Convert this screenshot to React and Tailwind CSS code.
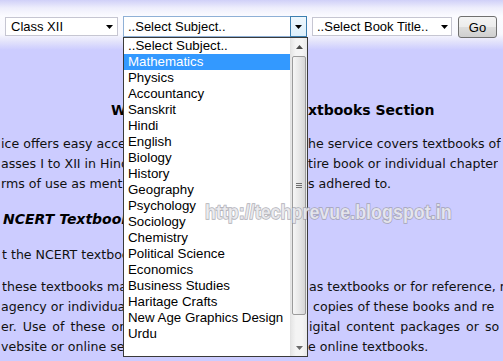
import React from "react";

function Tri({ color = "#000" }) {
  return (
    <svg width="7" height="4" viewBox="0 0 7 4" className="block shrink-0">
      <path d="M0 0H7L3.5 4Z" fill={color} />
    </svg>
  );
}

function UpTri() {
  return (
    <svg width="7" height="4" viewBox="0 0 7 4" className="block">
      <path d="M3.5 0L7 4H0Z" fill="#4a4a4a" />
    </svg>
  );
}

const subjects = [
  "..Select Subject..",
  "Mathematics",
  "Physics",
  "Accountancy",
  "Sanskrit",
  "Hindi",
  "English",
  "Biology",
  "History",
  "Geography",
  "Psychology",
  "Sociology",
  "Chemistry",
  "Political Science",
  "Economics",
  "Business Studies",
  "Haritage Crafts",
  "New Age Graphics Design",
  "Urdu",
];

function Line({ left, right, leftClass, rightClass, rowClass }) {
  return (
    <div className={"flex h-[20px] leading-[20px] whitespace-nowrap " + (rowClass || "")}>
      <div className={"w-[123px] shrink-0 overflow-hidden " + (leftClass || "")}>{left}</div>
      <div className="w-[185px] shrink-0" />
      <div className={"min-w-0 overflow-hidden " + (rightClass || "")}>{right}</div>
    </div>
  );
}

export default function App() {
  return (
    <div className="relative w-[503px] h-[361px] overflow-hidden bg-[#ccccff] font-['DejaVu_Sans',sans-serif] text-[12.6px] text-[#111]">
      {/* header band */}
      <div className="h-[50px] bg-[linear-gradient(to_bottom,#d0d0f8_0px,#eeeefc_8px,#fbfbff_16px,#f8f8fe_34px,#e2e2fb_42px,#ccccff_50px)] flex items-start pt-[16px] pl-[5px] font-['Liberation_Sans',sans-serif] text-[13px] text-black">
        <div className="mt-[1px] w-[113px] h-[19px] border border-[#c6c6d2] bg-white flex items-center justify-between pl-[5px] pr-[4px] leading-none">
          <span>Class XII</span>
          <Tri />
        </div>
        <div className="ml-[5px] w-[184px] h-[21px] flex">
          <div className="flex-1 border border-r-0 border-[#8fb0d6] bg-white flex items-center pl-[4px] leading-none">
            ..Select Subject..
          </div>
          <div className="w-[17px] border border-[#3c7fb1] bg-[linear-gradient(to_bottom,#eef7fd,#dcefFC)] flex items-center justify-center">
            <Tri />
          </div>
        </div>
        <div className="ml-[5px] mt-[1px] w-[140px] h-[19px] border border-[#c6c6d2] bg-white flex items-center justify-between pl-[4px] pr-[3px] leading-none">
          <span>..Select Book Title..</span>
          <Tri />
        </div>
        <div className="ml-[6px] w-[39px] h-[22px] rounded-[3px] border border-[#707070] bg-[linear-gradient(to_bottom,#f4f4f4_0%,#ececec_50%,#dddddd_51%,#cfcfcf_100%)] flex items-center justify-center leading-none">
          Go
        </div>
      </div>

      {/* page content */}
      <div className="flex flex-col">
        <div className="mt-[50px]">
          <Line
            rowClass="font-bold text-[14px] text-black"
            leftClass="pl-[111px]"
            left="W"
            right="xtbooks Section"
          />
        </div>

        <div className="mt-[14px] flex flex-col">
          <Line leftClass="pl-[1px]" left="ice offers easy access" right="he service covers textbooks of" />
          <Line leftClass="pl-[1px]" left="asses I to XII in Hindi" right="tire book or individual chapter" />
          <Line leftClass="pl-[1px]" left="rms of use as mentioned" right="s adhered to." />
        </div>

        <div className="mt-[15px]">
          <Line rowClass="font-bold italic text-[14px] text-black" leftClass="pl-[3px]" left="NCERT Textbooks" right="" />
        </div>

        <div className="mt-[16px]">
          <Line leftClass="pl-[2px]" left="t the NCERT textbooks" right="" />
        </div>

        <div className="mt-[12px] flex flex-col">
          <Line leftClass="pl-[2px]" left="these textbooks may" right="as textbooks or for reference, r" rightClass="pl-[1px]" />
          <Line leftClass="pl-[1px]" left="agency or individual may" right="copies of these books and re" rightClass="pl-[5px]" />
          <Line rowClass="[word-spacing:2px]" leftClass="pl-[1px]" left="er. Use of these online" right="igital content packages or so" rightClass="pl-[1px]" />
          <Line leftClass="pl-[1px]" left="vebsite or online service" right="e online textbooks." />
        </div>
      </div>

      {/* open dropdown list */}
      <div className="absolute left-[123px] top-[37px] w-[185px] h-[320px] border border-[#3a3a3a] bg-white flex font-['Liberation_Sans',sans-serif] text-[13.3px] text-black">
        <div className="flex-1 flex flex-col">
          {subjects.map((s, i) => (
            <div
              key={s}
              className={
                i === 1
                  ? "h-[16px] leading-[16px] pl-[4px] whitespace-nowrap bg-[#3399ff] text-white"
                  : "h-[16px] leading-[16px] pl-[4px] whitespace-nowrap"
              }
            >
              {s}
            </div>
          ))}
        </div>
        <div className="w-[17px] flex flex-col bg-[linear-gradient(to_right,#e6e6e6,#f4f4f4_30%,#f4f4f4_70%,#e9e9e9)] border-l border-[#e2e2e2]">
          <div className="h-[17px] flex items-center justify-center">
            <UpTri />
          </div>
          <div className="mt-[1px] mx-[1px] h-[259px] rounded-[2px] border border-[#9b9b9b] bg-[linear-gradient(to_right,#f6f6f6,#e8e8e8_50%,#d6d6d6)] flex items-center justify-center">
            <div className="flex flex-col gap-[1px]">
              <div className="w-[6px] h-[1px] bg-[#707070]" />
              <div className="w-[6px] h-[1px] bg-[#707070]" />
              <div className="w-[6px] h-[1px] bg-[#707070]" />
            </div>
          </div>
          <div className="flex-1" />
          <div className="h-[17px] flex items-center justify-center">
            <Tri color="#6a6a6a" />
          </div>
        </div>
      </div>

      {/* watermark */}
      <div className="absolute left-[205px] top-[201px] origin-left scale-x-[0.895] whitespace-nowrap font-['Liberation_Sans',sans-serif] font-bold text-[20px] leading-[22px] text-[rgba(236,236,240,0.85)] [-webkit-text-stroke:1.5px_rgba(150,150,160,0.75)] [paint-order:stroke_fill]">
        http://techprevue.blogspot.in
      </div>
    </div>
  );
}
